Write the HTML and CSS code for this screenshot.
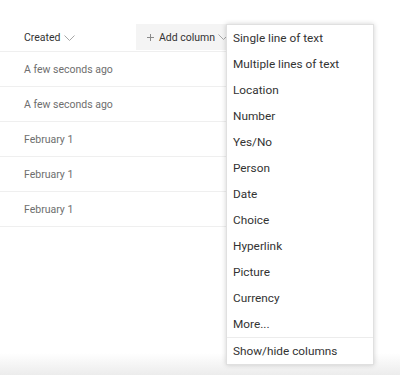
FILE: index.html
```html
<!DOCTYPE html>
<html>
<head>
<meta charset="utf-8">
<link rel="stylesheet" href="styles.css">
</head>
<body>
<div class="page">
  <div class="list">
    <div class="row header">
      <div class="cell first">
        <span class="hdr-text">Created</span>
        <svg class="chev" width="11" height="6" viewBox="0 0 11 6"><path d="M0.5 0.5 L5.5 5.5 L10.5 0.5" fill="none" stroke="#a6a6a6" stroke-width="1"/></svg>
      </div>
      <div class="cell add">
        <svg class="plus" width="7" height="7" viewBox="0 0 7 7"><path d="M3.5 0 V7 M0 3.5 H7" fill="none" stroke="#8a8a8a" stroke-width="1"/></svg>
        <span class="hdr-text">Add column</span>
        <svg class="chev" width="11" height="6" viewBox="0 0 11 6"><path d="M0.5 0.5 L5.5 5.5 L10.5 0.5" fill="none" stroke="#a6a6a6" stroke-width="1"/></svg>
      </div>
    </div>
    <div class="row"><div class="cell first">A few seconds ago</div></div>
    <div class="row"><div class="cell first">A few seconds ago</div></div>
    <div class="row"><div class="cell first">February 1</div></div>
    <div class="row"><div class="cell first">February 1</div></div>
    <div class="row"><div class="cell first">February 1</div></div>
  </div>
  <div class="fade"></div>
  <div class="menu">
    <div class="item">Single line of text</div>
    <div class="item">Multiple lines of text</div>
    <div class="item">Location</div>
    <div class="item">Number</div>
    <div class="item">Yes/No</div>
    <div class="item">Person</div>
    <div class="item">Date</div>
    <div class="item">Choice</div>
    <div class="item">Hyperlink</div>
    <div class="item">Picture</div>
    <div class="item">Currency</div>
    <div class="item">More...</div>
    <div class="sep"></div>
    <div class="item">Show/hide columns</div>
  </div>
</div>
</body>
</html>
```

FILE: styles.css
```css
html, body {
  margin: 0;
  padding: 0;
  background: #fff;
}
body {
  font-family: Roboto, "Liberation Sans", Arial, sans-serif;
  width: 400px;
  height: 375px;
  overflow: hidden;
}
.page {
  position: relative;
  width: 400px;
  height: 375px;
  display: flex;
  flex-direction: column;
}
.list {
  padding-top: 24px;
  width: 300px;
  flex: 1;
}
.row {
  display: flex;
  height: 34px;
  border-bottom: 1px solid #efefef;
}
.row.header {
  height: 27px;
}
.cell {
  display: flex;
  align-items: center;
  font-size: 10.5px;
  color: #6e6e6e;
}
.cell.first {
  width: 112px;
  padding-left: 24px;
}
.header .cell {
  color: #333;
}
.header .cell.first {
  height: 27px;
}
.hdr-text {
  margin-right: 3px;
}
.cell.add {
  background: #f4f4f4;
  height: 26px;
  width: 153px;
  padding-left: 11px;
}
.plus {
  margin-right: 5px;
}
.fade {
  height: 22px;
  background: linear-gradient(to bottom, rgba(235,235,235,0), #ececec);
}
.menu {
  position: absolute;
  left: 226px;
  top: 24px;
  width: 146px;
  background: #fff;
  border: 1px solid #e0e0e0;
  box-shadow: 0 0 5px rgba(0,0,0,0.18);
}
.item {
  height: 26px;
  line-height: 26px;
  padding-left: 6px;
  font-size: 11.8px;
  color: #333;
  white-space: nowrap;
}
.sep {
  height: 1px;
  background: #ececec;
}
```
